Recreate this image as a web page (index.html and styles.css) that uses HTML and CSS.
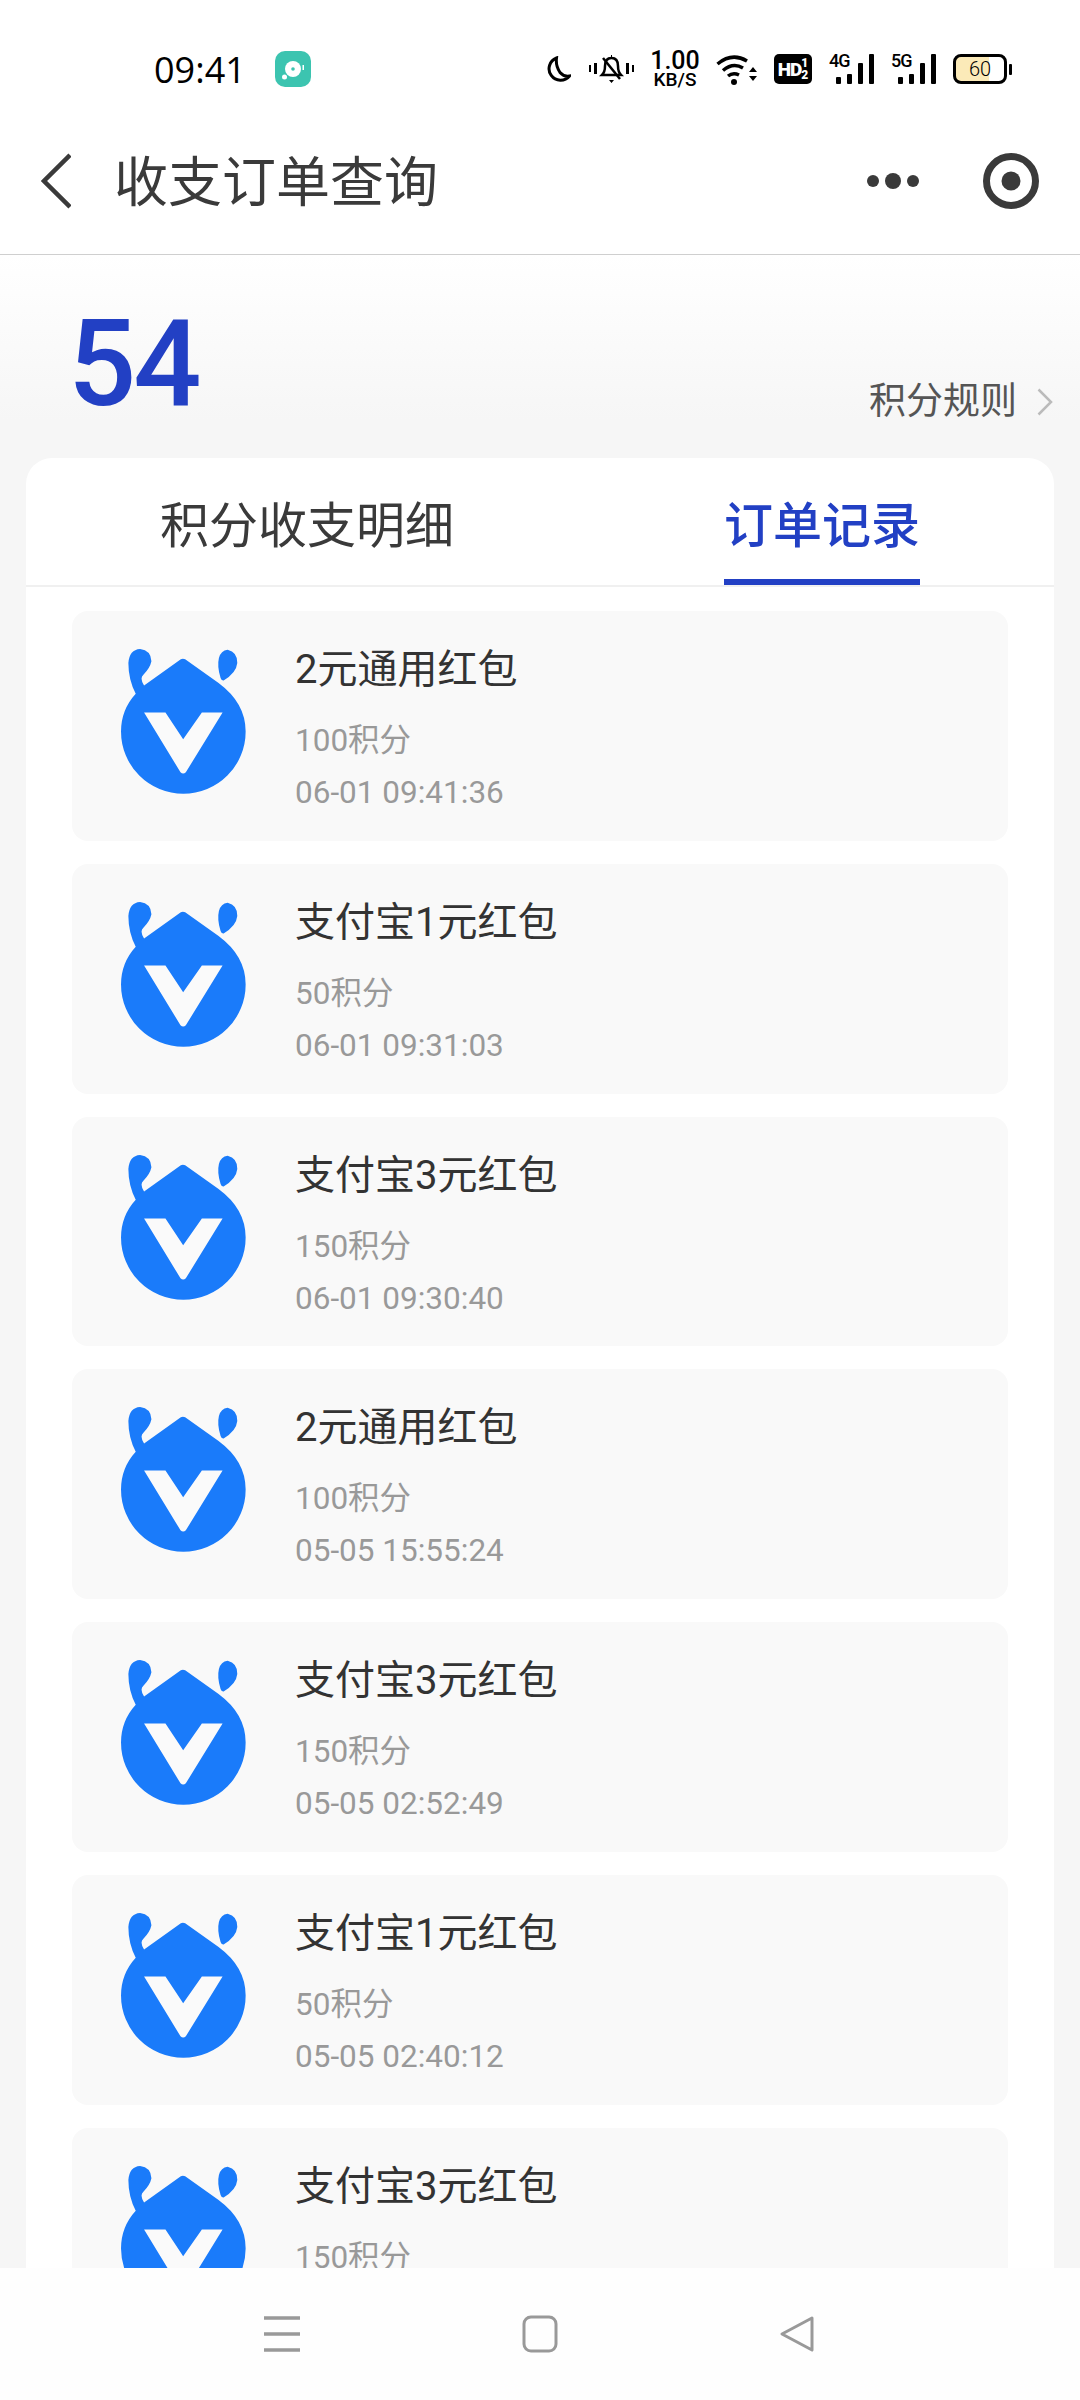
FILE: index.html
```html
<!DOCTYPE html>
<html lang="zh-CN">
    <head>
        <meta charset="UTF-8" />
        <title>收支订单查询</title>
        <link rel="stylesheet" href="styles.css">
    </head>
    <body>
        <svg class="defs" width="0" height="0">
            <symbol id="logo" viewBox="90 85 380 440">
                <path fill="#1a7bfa" d="M272 119Q278 115 285 119L385 190Q466 250 466 335A186 186 0 0 1 93 335Q93 270 137 222Q115 180 115 130Q118 90 150 88Q183 92 184 125Q180 145 160 165Q148 175 162 197Z"/>
                <path fill="#1a7bfa" d="M412 90Q442 97 441 130Q438 160 400 182Q393 183 391 175Q380 140 386 115Q392 92 412 90Z"/>
                <path fill="#fafafa" d="M162 278H226L279 358L335 278H397L287 457Q279 465 271 457Z"/>
            </symbol>
        </svg>

        <div class="statusbar">
            <div class="status-left">
                <span class="time">09:41</span>
                <svg class="app-icon" width="36" height="36" viewBox="0 0 36 36">
                    <rect width="36" height="36" rx="10" fill="#3cc4b0"/>
                    <circle cx="18" cy="18" r="8" fill="#fff"/>
                    <circle cx="18" cy="18" r="1.800" fill="#3cc4b0"/>
                    <circle cx="9.500" cy="26" r="2.500" fill="#fff"/>
                    <rect x="27.500" y="14" width="1.500" height="5" fill="#fff"/>
                </svg>
            </div>
            <div class="status-right">
                <svg class="moon" width="26" height="27" viewBox="0 0 26 27">
                    <path d="M11.500 2A11.500 11.500 0 1 0 24.500 20Q19 21 15 16.500Q10.500 10 11.500 2Z" fill="none" stroke="#000" stroke-width="3"/>
                </svg>
                <svg width="45" height="30" viewBox="0 0 45 30">
                    <path d="M13 21Q16 18 16 12Q16 4 22.500 4Q29 4 29 12Q29 18 32 21Z" fill="none" stroke="#000" stroke-width="2.500"/>
                    <path d="M14 4L31 25" stroke="#000" stroke-width="2.500"/>
                    <path d="M20 26H25L22.500 29Z M22 1H23V3H22Z" fill="#000"/>
                    <path d="M0 11H2V18H0Z M5 9H8V20H5Z M37 9H40V20H37Z M43 11H45V18H43Z" fill="#000"/>
                </svg>
                <div class="speed">
                    <span class="speed-num">1.00</span>
                    <span class="speed-unit">KB/S</span>
                </div>
                <svg width="41" height="31" viewBox="0 0 41 31">
                    <path d="M1.500 10Q16 -2 31 7" fill="none" stroke="#000" stroke-width="3.500"/>
                    <path d="M7 16.500Q17 8 27 14" fill="none" stroke="#000" stroke-width="3.500"/>
                    <path d="M12 22Q17 18 23 21" fill="none" stroke="#000" stroke-width="3.500"/>
                    <circle cx="18" cy="28" r="3" fill="#000"/>
                    <path d="M37 13L41 18H33Z M33 22H41L37 27Z" fill="#000"/>
                </svg>
                <div class="hd">
                    <span>HD</span>
                    <span class="hd-sub">1<br>2</span>
                </div>
                <div class="signal">
                    <span class="signal-name">4G</span>
                    <i class="bar bar1"></i><i class="bar bar2"></i><i class="bar bar3"></i><i class="bar bar4"></i>
                </div>
                <div class="signal">
                    <span class="signal-name">5G</span>
                    <i class="bar bar1"></i><i class="bar bar2"></i><i class="bar bar3"></i><i class="bar bar4"></i>
                </div>
                <div class="battery">
                    <div class="battery-body"><span>60</span></div>
                    <i class="battery-tip"></i>
                </div>
            </div>
        </div>

        <div class="header">
            <svg class="back" width="30" height="56" viewBox="0 0 30 56">
                <path d="M29 2L3 28L29 54" fill="none" stroke="#3a3a3a" stroke-width="4.500"/>
            </svg>
            <h1 class="title">收支订单查询</h1>
            <div class="more"><i></i><i class="big"></i><i></i></div>
            <svg class="target" width="56" height="56" viewBox="0 0 56 56">
                <circle cx="28" cy="28" r="24.500" fill="none" stroke="#3a3a3a" stroke-width="7"/>
                <circle cx="28" cy="28" r="9.500" fill="#3a3a3a"/>
            </svg>
        </div>

        <div class="main">
            <div class="summary">
                <div class="score">54</div>
                <div class="rules">
                    <span>积分规则</span>
                    <svg width="16" height="28" viewBox="0 0 16 28">
                        <path d="M1.500 1.500L14 14L1.500 26.500" fill="none" stroke="#bbb" stroke-width="2.500"/>
                    </svg>
                </div>
            </div>

            <div class="panel">
                <div class="tabs">
                    <div class="tab">积分收支明细</div>
                    <div class="tab active">订单记录</div>
                </div>
                <div class="orders">
                    <div class="order">
                        <svg class="logo"><use href="#logo"/></svg>
                        <div class="info">
                            <div class="name">2元通用红包</div>
                            <div class="sub">100积分</div>
                            <div class="sub">06-01 09:41:36</div>
                        </div>
                    </div>
                    <div class="order">
                        <svg class="logo"><use href="#logo"/></svg>
                        <div class="info">
                            <div class="name">支付宝1元红包</div>
                            <div class="sub">50积分</div>
                            <div class="sub">06-01 09:31:03</div>
                        </div>
                    </div>
                    <div class="order">
                        <svg class="logo"><use href="#logo"/></svg>
                        <div class="info">
                            <div class="name">支付宝3元红包</div>
                            <div class="sub">150积分</div>
                            <div class="sub">06-01 09:30:40</div>
                        </div>
                    </div>
                    <div class="order">
                        <svg class="logo"><use href="#logo"/></svg>
                        <div class="info">
                            <div class="name">2元通用红包</div>
                            <div class="sub">100积分</div>
                            <div class="sub">05-05 15:55:24</div>
                        </div>
                    </div>
                    <div class="order">
                        <svg class="logo"><use href="#logo"/></svg>
                        <div class="info">
                            <div class="name">支付宝3元红包</div>
                            <div class="sub">150积分</div>
                            <div class="sub">05-05 02:52:49</div>
                        </div>
                    </div>
                    <div class="order">
                        <svg class="logo"><use href="#logo"/></svg>
                        <div class="info">
                            <div class="name">支付宝1元红包</div>
                            <div class="sub">50积分</div>
                            <div class="sub">05-05 02:40:12</div>
                        </div>
                    </div>
                    <div class="order">
                        <svg class="logo"><use href="#logo"/></svg>
                        <div class="info">
                            <div class="name">支付宝3元红包</div>
                            <div class="sub">150积分</div>
                        </div>
                    </div>
                </div>
            </div>
        </div>

        <div class="navbar">
            <svg width="36" height="36" viewBox="0 0 36 36">
                <path d="M0 2H36M0 18H36M0 34H36" stroke="#999" stroke-width="3.500"/>
            </svg>
            <svg width="36" height="38" viewBox="0 0 36 38">
                <rect x="2" y="2" width="32" height="34" rx="7" fill="none" stroke="#999" stroke-width="3"/>
            </svg>
            <svg width="36" height="38" viewBox="0 0 36 38">
                <path d="M33 3L3 19L33 35Z" fill="none" stroke="#999" stroke-width="3" stroke-linejoin="round"/>
            </svg>
        </div>
    </body>
</html>
```

FILE: styles.css
```css
* {
    box-sizing: border-box;
}
body {
    margin: 0;
    width: 1080px;
    height: 2400px;
    display: flex;
    flex-direction: column;
    overflow: hidden;
    background: #fff;
    font-family: Roboto, "Noto Sans CJK SC", sans-serif;
    color: #333;
}
.defs {
    position: absolute;
}

/* status bar */
.statusbar {
    height: 108px;
    flex: none;
    padding: 30px 68px 0 154px;
    display: flex;
    justify-content: space-between;
    align-items: center;
}
.status-left {
    display: flex;
    align-items: center;
    gap: 29px;
}
.time {
    font: 36px "Open Sans", sans-serif;
    color: #000;
}
.status-right {
    display: flex;
    align-items: center;
    gap: 17px;
    color: #000;
}
.moon {
    margin-right: 1px;
}
.speed {
    width: 48px;
    display: flex;
    flex-direction: column;
    align-items: center;
    gap: 1px;
    font-weight: 500;
}
.speed-num {
    font-size: 25px;
    line-height: 20px;
}
.speed-unit {
    font-size: 19px;
    line-height: 15px;
}
.hd {
    width: 38px;
    height: 30px;
    background: #000;
    border-radius: 5px;
    color: #fff;
    display: flex;
    align-items: center;
    justify-content: center;
    font-size: 19px;
    font-weight: 900;
    letter-spacing: -1px;
}
.hd-sub {
    font-size: 12px;
    line-height: 12px;
    letter-spacing: 0;
}
.signal {
    position: relative;
    width: 45px;
    height: 30px;
    display: flex;
    align-items: flex-end;
    justify-content: flex-end;
    gap: 6px;
}
.signal-name {
    position: absolute;
    left: 0;
    top: -1px;
    font-size: 18px;
    line-height: 16px;
    font-weight: 500;
    letter-spacing: -1px;
}
.bar {
    width: 5px;
    background: #000;
    border-radius: 1px;
}
.bar1 { height: 7px; }
.bar2 { height: 10px; }
.bar3 { height: 21px; }
.bar4 { height: 30px; }
.battery {
    width: 59px;
    display: flex;
    align-items: center;
    gap: 2px;
}
.battery-body {
    width: 54px;
    height: 30px;
    border: 3px solid #000;
    border-radius: 8px;
    background: linear-gradient(90deg, #fbeab8 68%, #fff 68%);
    font-size: 20px;
    font-weight: 300;
    line-height: 24px;
    text-align: center;
}
.battery-tip {
    width: 3px;
    height: 11px;
    background: #000;
    border-radius: 1px;
}

/* title bar */
.header {
    height: 147px;
    flex: none;
    padding: 0 41px;
    display: flex;
    align-items: center;
    border-bottom: 1.500px solid #cfcfcf;
}
.title {
    margin: 0 0 5px 43px;
    font-size: 54px;
    font-weight: 400;
    color: #3a3a3a;
    flex: 1;
}
.more {
    display: flex;
    align-items: center;
    gap: 6px;
    margin-right: 64px;
}
.more i {
    width: 12px;
    height: 12px;
    border-radius: 50%;
    background: #3a3a3a;
}
.more .big {
    width: 16px;
    height: 16px;
}

/* points */
.main {
    flex: 1;
    min-height: 0;
    overflow: hidden;
    padding: 0 26px;
    background: linear-gradient(#fff, #f6f6f6 165px);
    display: flex;
    flex-direction: column;
}
.summary {
    height: 203px;
    flex: none;
    padding: 0 1px 34px 42px;
    display: flex;
    justify-content: space-between;
    align-items: flex-end;
}
.score {
    font-size: 120px;
    line-height: 120px;
    font-weight: 500;
    color: #2240c4;
    margin-bottom: 0;
    letter-spacing: -3px;
}
.rules {
    display: flex;
    align-items: center;
    gap: 20px;
    font-size: 37px;
    line-height: 44px;
    color: #555;
}

/* panel and tabs */
.panel {
    flex: 1;
    background: #fff;
    border-radius: 26px 26px 0 0;
    overflow: hidden;
}
.tabs {
    height: 129px;
    display: flex;
    border-bottom: 2px solid #f0f0f0;
}
.tab {
    position: relative;
    padding-top: 8px;
    font-size: 49px;
    line-height: 122px;
    color: #3a3a3a;
    margin-left: 134px;
}
.tab.active {
    margin-left: 270px;
    color: #2240c4;
    font-weight: 500;
}
.tab.active::after {
    content: "";
    position: absolute;
    left: 0;
    right: 0;
    bottom: 0;
    height: 6px;
    background: #2240c4;
}

/* order list */
.orders {
    padding: 24px 46px 0;
    display: flex;
    flex-direction: column;
    gap: 23px;
}
.order {
    height: 229.800px;
    flex: none;
    background: #f9f9f9;
    border-radius: 16px;
    padding: 31px 0 0 48px;
    display: flex;
}
.logo {
    width: 127px;
    height: 147px;
    flex: none;
    margin: 6px 48px 0 0;
}
.name {
    font-size: 40px;
    line-height: 56px;
    color: #333;
    margin-bottom: 17px;
}
.sub {
    font-size: 31.500px;
    line-height: 52px;
    color: #999;
}

/* bottom nav */
.navbar {
    height: 132px;
    flex: none;
    background: #fefefe;
    padding: 0 265px 0 264px;
    display: flex;
    justify-content: space-between;
    align-items: center;
    position: relative;
}
```
